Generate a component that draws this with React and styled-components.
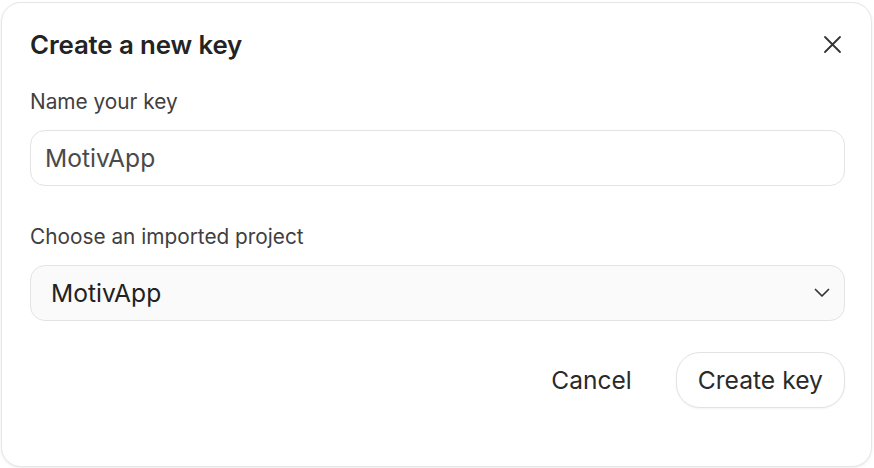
import React from 'react';
import styled, { createGlobalStyle } from 'styled-components';

const GlobalStyle = createGlobalStyle`
  html, body {
    margin: 0;
    padding: 0;
    background: #ffffff;
    font-family: 'Inter', 'Noto Sans', sans-serif;
  }
`

const Page = styled.div`
  width: 874px;
  height: 468px;
  padding: 2px 2px 1px 1px;
  box-sizing: border-box;
`

const Dialog = styled.div`
  height: 100%;
  box-sizing: border-box;
  border: 1px solid #e6e6e6;
  border-radius: 20px;
  background: #ffffff;
  box-shadow: 0 1px 3px rgba(0, 0, 0, 0.08);
  padding: 25px 26px 0 28px;
  display: flex;
  flex-direction: column;
`

const Header = styled.div`
  display: flex;
  align-items: center;
  justify-content: space-between;
  height: 32px;
`

const Title = styled.h2`
  margin: 0;
  font-size: 25.8px;
  font-weight: 600;
  color: #232323;
  letter-spacing: -0.1px;
`

const Close = styled.button`
  border: none;
  background: transparent;
  padding: 0;
  width: 22px;
  height: 22px;
  display: flex;
  align-items: center;
  justify-content: center;
  margin-right: 2px;
  color: #333;
  cursor: pointer;
`

const Label = styled.div`
  font-size: 20.8px;
  color: #3f3f3f;
  margin-top: ${p => p.top}px;
  line-height: 22px;
`

const Field = styled.div`
  margin-top: ${p => p.top}px;
  height: 56px;
  box-sizing: border-box;
  border: 1px solid #e3e3e3;
  border-radius: 15px;
  background: ${p => (p.filled ? '#fafafa' : '#ffffff')};
  display: flex;
  align-items: center;
  justify-content: space-between;
  padding: 0 14px 0 ${p => (p.filled ? 20 : 14)}px;
  font-size: 24.6px;
  color: ${p => (p.filled ? '#222' : '#4a4a4a')};
`

const Actions = styled.div`
  margin-top: 31px;
  display: flex;
  justify-content: flex-end;
  align-items: center;
  gap: 44px;
`

const TextButton = styled.button`
  border: none;
  background: transparent;
  font-family: inherit;
  font-size: 24.5px;
  color: #2a2a2a;
  padding: 0;
  cursor: pointer;
`

const OutlineButton = styled.button`
  height: 56px;
  box-sizing: border-box;
  padding: 0 21px;
  border: 1px solid #e3e3e3;
  border-radius: 24px;
  background: #ffffff;
  font-family: inherit;
  font-size: 24.7px;
  color: #2a2a2a;
  box-shadow: 0 1px 2px rgba(0, 0, 0, 0.05);
  cursor: pointer;
`

function App() {
  return (
    <Page>
      <GlobalStyle />
      <Dialog>
        <Header>
          <Title>Create a new key</Title>
          <Close aria-label="Close">
            <svg width="19" height="19" viewBox="0 0 19 19" fill="none" stroke="#333" strokeWidth="1.8" strokeLinecap="round">
              <path d="M2 2L17 17M17 2L2 17" />
            </svg>
          </Close>
        </Header>
        <Label top={31}>Name your key</Label>
        <Field top={17}>MotivApp</Field>
        <Label top={40}>Choose an imported project</Label>
        <Field top={17} filled>
          <span>MotivApp</span>
          <svg width="16" height="10" viewBox="0 0 16 10" fill="none" stroke="#333" strokeWidth="1.7" strokeLinecap="round" strokeLinejoin="round">
            <path d="M1.5 1.5L8 8L14.5 1.5" />
          </svg>
        </Field>
        <Actions>
          <TextButton>Cancel</TextButton>
          <OutlineButton>Create key</OutlineButton>
        </Actions>
      </Dialog>
    </Page>
  );
}

export default App;
